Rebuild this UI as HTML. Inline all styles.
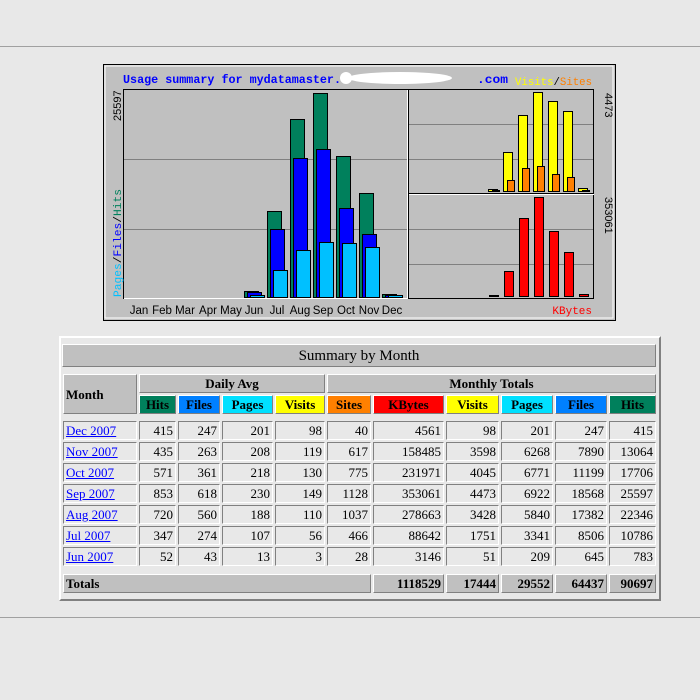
<!DOCTYPE html>
<html><head><style>
body{margin:0;width:700px;height:700px;background:#e8e8e8;position:relative;overflow:hidden;font-family:"Liberation Serif",serif}
.hr{position:absolute;left:0;width:700px;height:1px;background:#a0a0a0}
#tb{position:absolute;left:59px;top:336px;width:598px;height:261px;border:2px solid;border-color:#fff #808080 #808080 #fff;}
#ttl{position:absolute;left:62px;top:344px;width:592px;height:21px;background:#c0c0c0;border:1px solid;border-color:#fff #808080 #808080 #fff;text-align:center;font-size:15px;line-height:22px;color:#000}
table{position:absolute;left:61px;top:372px;border-collapse:separate;border-spacing:2px;table-layout:fixed;font-size:13px}
td{padding:0 2px;border:1px solid;border-color:#808080 #fff #fff #808080;background:#e8e8e8;text-align:right;height:17px;line-height:17px;white-space:nowrap;overflow:hidden}
td.h{background:#c0c0c0;text-align:center;font-weight:bold;border-color:#fff #808080 #808080 #fff}
td.l{text-align:left}
td a{color:#00f;text-decoration:underline}
tr.sp td{height:3px;padding:0;border:0;background:transparent}
tr.sp2 td{height:4px;padding:0;border:0;background:transparent}
tr.tot td{background:#c0c0c0;font-weight:bold;border-color:#fff #808080 #808080 #fff}
</style></head><body>
<div class="hr" style="top:46px"></div>
<div class="hr" style="top:617px"></div>
<svg style="position:absolute;left:0;top:0" width="700" height="330" xmlns="http://www.w3.org/2000/svg">
<rect x="103.5" y="64.5" width="512" height="256" fill="#c0c0c0" stroke="#000"/>
<rect x="105" y="66" width="508" height="252" fill="none" stroke="#fff" stroke-width="1"/>
<rect x="123.5" y="89.5" width="284" height="209" fill="#c0c0c0" stroke="#000"/>
<line x1="124" y1="298.5" x2="408" y2="298.5" stroke="#fff"/><line x1="407.5" y1="90" x2="407.5" y2="299" stroke="#fff"/>
<rect x="408.5" y="89.5" width="185" height="104" fill="#c0c0c0" stroke="#000"/>
<rect x="408.5" y="194.5" width="185" height="104" fill="#c0c0c0" stroke="#000"/>
<line x1="409" y1="194.5" x2="594" y2="194.5" stroke="#fff"/>
<g stroke="#808080"><line x1="124" y1="159.5" x2="407" y2="159.5"/><line x1="124" y1="229.5" x2="407" y2="229.5"/>
<line x1="409" y1="124.5" x2="593" y2="124.5"/><line x1="409" y1="159.5" x2="593" y2="159.5"/>
<line x1="409" y1="229.5" x2="593" y2="229.5"/><line x1="409" y1="264.5" x2="593" y2="264.5"/></g>
<g stroke="#000" stroke-width="1">
<g fill="#00805c">
<rect x="244.5" y="291.5" width="14" height="6"/><rect x="267.5" y="211.5" width="14" height="86"/><rect x="290.5" y="119.5" width="14" height="178"/><rect x="313.5" y="93.5" width="14" height="204"/><rect x="336.5" y="156.5" width="14" height="141"/><rect x="359.5" y="193.5" width="14" height="104"/><rect x="382.5" y="294.5" width="14" height="3"/></g>
<g fill="#0000ff">
<rect x="247.5" y="292.5" width="14" height="5"/><rect x="270.5" y="229.5" width="14" height="68"/><rect x="293.5" y="158.5" width="14" height="139"/><rect x="316.5" y="149.5" width="14" height="148"/><rect x="339.5" y="208.5" width="14" height="89"/><rect x="362.5" y="234.5" width="14" height="63"/><rect x="385.5" y="295.5" width="14" height="2"/></g>
<g fill="#00c0ff">
<rect x="250.5" y="295.5" width="14" height="2"/><rect x="273.5" y="270.5" width="14" height="27"/><rect x="296.5" y="250.5" width="14" height="47"/><rect x="319.5" y="242.5" width="14" height="55"/><rect x="342.5" y="243.5" width="14" height="54"/><rect x="365.5" y="247.5" width="14" height="50"/><rect x="388.5" y="295.5" width="14" height="2"/></g>
<g fill="#ffff00">
<rect x="488.5" y="189.5" width="9" height="2"/><rect x="503.5" y="152.5" width="9" height="39"/><rect x="518.5" y="115.5" width="9" height="76"/><rect x="533.5" y="92.5" width="9" height="99"/><rect x="548.5" y="101.5" width="9" height="90"/><rect x="563.5" y="111.5" width="9" height="80"/><rect x="578.5" y="188.5" width="9" height="3"/></g>
<g fill="#ff8000">
<rect x="492.5" y="190.5" width="7" height="1"/><rect x="507.5" y="180.5" width="7" height="11"/><rect x="522.5" y="168.5" width="7" height="23"/><rect x="537.5" y="166.5" width="7" height="25"/><rect x="552.5" y="174.5" width="7" height="17"/><rect x="567.5" y="177.5" width="7" height="14"/><rect x="582.5" y="190.5" width="7" height="1"/></g>
<g fill="#ff0000">
<rect x="489.5" y="295.5" width="9" height="1"/><rect x="504.5" y="271.5" width="9" height="25"/><rect x="519.5" y="218.5" width="9" height="78"/><rect x="534.5" y="197.5" width="9" height="99"/><rect x="549.5" y="231.5" width="9" height="65"/><rect x="564.5" y="252.5" width="9" height="44"/><rect x="579.5" y="294.5" width="9" height="2"/></g>
</g>
<text x="123" y="83" font-family="Liberation Mono,monospace" font-weight="bold" font-size="12" fill="#0000ff" textLength="218" lengthAdjust="spacingAndGlyphs">Usage summary for mydatamaster.</text>
<ellipse cx="400" cy="78" rx="52" ry="6" fill="#fff"/><circle cx="346" cy="78" r="6" fill="#fff"/>
<text x="477" y="83" font-family="Liberation Mono,monospace" font-weight="bold" font-size="12" fill="#0000ff" textLength="31" lengthAdjust="spacingAndGlyphs">.com</text>
<text x="515" y="85" font-family="Liberation Mono,monospace" font-size="11" fill="#ffff00" textLength="77" lengthAdjust="spacingAndGlyphs">Visits<tspan fill="#000">/</tspan><tspan fill="#ff8000">Sites</tspan></text>
<text x="592" y="314" text-anchor="end" font-family="Liberation Mono,monospace" font-size="11" fill="#ff0000">KBytes</text>
<g font-family="Liberation Sans,sans-serif" font-size="11.5" fill="#000" text-anchor="middle">
<text x="139" y="314">Jan</text><text x="162" y="314">Feb</text><text x="185" y="314">Mar</text><text x="208" y="314">Apr</text><text x="231" y="314">May</text><text x="254" y="314">Jun</text><text x="277" y="314">Jul</text><text x="300" y="314">Aug</text><text x="323" y="314">Sep</text><text x="346" y="314">Oct</text><text x="369" y="314">Nov</text><text x="392" y="314">Dec</text></g>
<text transform="translate(121,121) rotate(-90)" font-family="Liberation Sans,sans-serif" font-size="11" fill="#000">25597</text>
<text transform="translate(121,297) rotate(-90)" font-family="Liberation Mono,monospace" font-size="11" fill="#00c0ff" textLength="108" lengthAdjust="spacingAndGlyphs">Pages<tspan fill="#000">/</tspan><tspan fill="#0000ff">Files</tspan><tspan fill="#000">/</tspan><tspan fill="#00805c">Hits</tspan></text>
<text transform="translate(605,93) rotate(90)" font-family="Liberation Sans,sans-serif" font-size="11" fill="#000">4473</text>
<text transform="translate(605,197) rotate(90)" font-family="Liberation Sans,sans-serif" font-size="11" fill="#000">353061</text>
</svg>
<div id="tb"></div>
<div id="ttl">Summary by Month</div>
<table>
<colgroup><col style="width:74px"><col style="width:37px"><col style="width:42px"><col style="width:51px"><col style="width:50px"><col style="width:44px"><col style="width:71px"><col style="width:53px"><col style="width:52px"><col style="width:52px"><col style="width:47px"></colgroup>
<tr><td class="h l" rowspan="2" style="height:37px">Month</td><td class="h" colspan="4">Daily Avg</td><td class="h" colspan="6">Monthly Totals</td></tr>
<tr><td class="h" style="background:#00805c">Hits</td><td class="h" style="background:#0080ff">Files</td><td class="h" style="background:#00e0ff">Pages</td><td class="h" style="background:#ffff00">Visits</td><td class="h" style="background:#ff8000">Sites</td><td class="h" style="background:#ff0000">KBytes</td><td class="h" style="background:#ffff00">Visits</td><td class="h" style="background:#00e0ff">Pages</td><td class="h" style="background:#0080ff">Files</td><td class="h" style="background:#00805c">Hits</td></tr>
<tr class="sp"><td colspan="11"></td></tr>
<tr><td class="l"><a>Dec 2007</a></td><td>415</td><td>247</td><td>201</td><td>98</td><td>40</td><td>4561</td><td>98</td><td>201</td><td>247</td><td>415</td></tr>
<tr><td class="l"><a>Nov 2007</a></td><td>435</td><td>263</td><td>208</td><td>119</td><td>617</td><td>158485</td><td>3598</td><td>6268</td><td>7890</td><td>13064</td></tr>
<tr><td class="l"><a>Oct 2007</a></td><td>571</td><td>361</td><td>218</td><td>130</td><td>775</td><td>231971</td><td>4045</td><td>6771</td><td>11199</td><td>17706</td></tr>
<tr><td class="l"><a>Sep 2007</a></td><td>853</td><td>618</td><td>230</td><td>149</td><td>1128</td><td>353061</td><td>4473</td><td>6922</td><td>18568</td><td>25597</td></tr>
<tr><td class="l"><a>Aug 2007</a></td><td>720</td><td>560</td><td>188</td><td>110</td><td>1037</td><td>278663</td><td>3428</td><td>5840</td><td>17382</td><td>22346</td></tr>
<tr><td class="l"><a>Jul 2007</a></td><td>347</td><td>274</td><td>107</td><td>56</td><td>466</td><td>88642</td><td>1751</td><td>3341</td><td>8506</td><td>10786</td></tr>
<tr><td class="l"><a>Jun 2007</a></td><td>52</td><td>43</td><td>13</td><td>3</td><td>28</td><td>3146</td><td>51</td><td>209</td><td>645</td><td>783</td></tr>
<tr class="sp2"><td colspan="11"></td></tr>
<tr class="tot"><td class="l" colspan="6">Totals</td><td>1118529</td><td>17444</td><td>29552</td><td>64437</td><td>90697</td></tr>
</table>
</body></html>
